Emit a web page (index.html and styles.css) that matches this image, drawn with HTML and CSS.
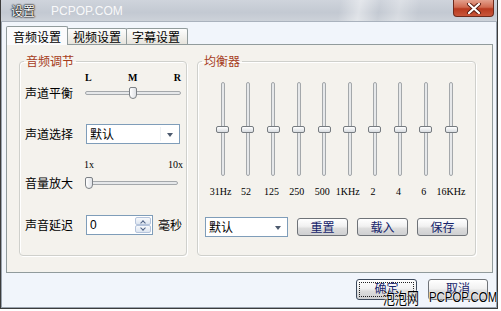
FILE: index.html
```html
<!DOCTYPE html>
<html lang="zh">
<head>
    <meta charset="UTF-8">
    <meta name="viewport" content="width=device-width, initial-scale=1.0">
    <title>设置</title>
    <link rel="stylesheet" href="styles.css">
</head>
<body>
    <div class="window">
        <div class="titlebar">
            <span class="title">设置</span>
            <span class="title-mark">PCPOP.COM</span>
            <div class="close-btn">
                <svg width="16" height="11" viewBox="0 0 16 11">
                    <path d="M3 1 L13 10 M13 1 L3 10" stroke="#5a1d12" stroke-width="4" stroke-linecap="round"/>
                    <path d="M3 1 L13 10 M13 1 L3 10" stroke="#fff" stroke-width="2.2" stroke-linecap="round"/>
                </svg>
            </div>
        </div>
        <div class="client">
            <div class="tabs">
                <div class="tab active">音频设置</div>
                <div class="tab">视频设置</div>
                <div class="tab">字幕设置</div>
            </div>
            <div class="panel">
                <fieldset class="group audio">
                    <legend>音频调节</legend>
                    <div class="scale lmr"><span>L</span><span>M</span><span>R</span></div>
                    <div class="field">
                        <span class="label">声道平衡</span>
                        <div class="hslider balance">
                            <div class="track"></div>
                            <div class="thumb" style="left: 44px"></div>
                        </div>
                    </div>
                    <div class="field combo-row">
                        <span class="label">声道选择</span>
                        <div class="combo wide">默认<span class="arrow"></span></div>
                    </div>
                    <div class="scale gain"><span>1x</span><span>10x</span></div>
                    <div class="field">
                        <span class="label">音量放大</span>
                        <div class="hslider volume">
                            <div class="track"></div>
                            <div class="thumb" style="left: 0px"></div>
                        </div>
                    </div>
                    <div class="field delay-row">
                        <span class="label">声音延迟</span>
                        <div class="spinner">
                            <span class="value">0</span>
                            <div class="spin-btns">
                                <div class="spin up"></div>
                                <div class="spin down"></div>
                            </div>
                        </div>
                        <span class="unit">毫秒</span>
                    </div>
                </fieldset>

                <fieldset class="group eq">
                    <legend>均衡器</legend>
                    <div class="eq-sliders">
                        <div class="vslider"><div class="track"></div><div class="thumb" style="top: 44px"></div></div>
                        <div class="vslider"><div class="track"></div><div class="thumb" style="top: 44px"></div></div>
                        <div class="vslider"><div class="track"></div><div class="thumb" style="top: 44px"></div></div>
                        <div class="vslider"><div class="track"></div><div class="thumb" style="top: 44px"></div></div>
                        <div class="vslider"><div class="track"></div><div class="thumb" style="top: 44px"></div></div>
                        <div class="vslider"><div class="track"></div><div class="thumb" style="top: 44px"></div></div>
                        <div class="vslider"><div class="track"></div><div class="thumb" style="top: 44px"></div></div>
                        <div class="vslider"><div class="track"></div><div class="thumb" style="top: 44px"></div></div>
                        <div class="vslider"><div class="track"></div><div class="thumb" style="top: 44px"></div></div>
                        <div class="vslider"><div class="track"></div><div class="thumb" style="top: 44px"></div></div>
                    </div>
                    <div class="eq-labels">
                        <span>31Hz</span><span>52</span><span>125</span><span>250</span><span>500</span>
                        <span>1KHz</span><span>2</span><span>4</span><span>6</span><span>16KHz</span>
                    </div>
                    <div class="eq-bottom">
                        <div class="combo preset">默认<span class="arrow"></span></div>
                        <button class="btn">重置</button>
                        <button class="btn">载入</button>
                        <button class="btn">保存</button>
                    </div>
                </fieldset>
            </div>
            <div class="footer">
                <button class="btn dlg default">确定</button>
                <button class="btn dlg">取消</button>
            </div>
        </div>
        <div class="watermark"><span class="wm-cn">泡泡网</span><span class="wm-en">PCPOP.COM</span></div>
    </div>
</body>
</html>
```

FILE: styles.css
```css
html, body {
    margin: 0;
    padding: 0;
}
body {
    background-color: #fff;
    font-family: "Noto Sans CJK SC", sans-serif;
    font-size: 12px;
    color: #000;
}
.window {
    position: relative;
    width: 496px;
    height: 308px;
    border: 1px solid #3c3c3c;
    border-top: none;
    background-color: #f1f5fb;
    display: flex;
    flex-direction: column;
    box-shadow: inset 1px 0 0 #9aa3ae, inset -1px 0 0 #9aa3ae, inset 0 -1px 0 #9aa3ae;
}
.titlebar {
    height: 22px;
    display: flex;
    align-items: flex-start;
    background: linear-gradient(100deg, rgba(255,255,255,0) 68%, rgba(255,255,255,0.45) 72%, rgba(255,255,255,0) 76%, rgba(255,255,255,0.3) 80%, rgba(255,255,255,0) 84%),
                linear-gradient(to bottom, #cfd4dc, #c3c9d2 60%, #cdd2d9);
    border-bottom: 1px solid #aab2bd;
    box-sizing: border-box;
}
.title {
    margin: 3px 0 0 10px;
    line-height: 16px;
    color: #fff;
    text-shadow: 0 0 2px #000, 0 0 2px #000, 0 0 1px #000;
}
.title-mark {
    margin: 4px 0 0 16px;
    line-height: 14px;
    font-family: "Liberation Sans", Arial, sans-serif;
    font-size: 12px;
    color: rgba(255, 255, 255, 0.9);
}
.close-btn {
    margin-left: auto;
    margin-right: 3px;
    width: 41px;
    height: 17px;
    box-sizing: border-box;
    border: 1px solid #6e2a1c;
    border-top: none;
    border-radius: 0 0 4px 4px;
    background: linear-gradient(to bottom, #e3a08d, #d06a50 45%, #b83a1f 55%, #c9563a);
    display: flex;
    align-items: center;
    justify-content: center;
}
.client {
    flex: 1;
    display: flex;
    flex-direction: column;
    padding: 4px 4px 0 5px;
}
.tabs {
    display: flex;
    align-items: flex-end;
    height: 18px;
    padding-left: 1px;
}
.tab {
    height: 15px;
    line-height: 15px;
    padding: 0 5px;
    border: 1px solid #919b9c;
    border-bottom: none;
    border-radius: 2px 2px 0 0;
    background: linear-gradient(to bottom, #fdfdfd, #e6e4dd);
    margin-left: -1px;
    box-sizing: content-box;
    white-space: nowrap;
}
.tab.active {
    position: relative;
    z-index: 1;
    height: 18px;
    line-height: 19px;
    margin-bottom: -1px;
    padding: 0 6px;
    background: #fbfbfc;
}
.tab + .tab {
    width: 48px;
}
.tab:last-child {
    width: 50px;
}
.panel {
    box-sizing: border-box;
    height: 229px;
    display: flex;
    gap: 10px;
    padding: 9px 16px 16px 12px;
    border: 1px solid #919b9c;
    background-color: #f4f2ed;
}
.group {
    margin: 0;
    border: 1px solid #cfd0cc;
    border-radius: 4px;
    box-shadow: inset 1px 1px 0 #fff, 1px 1px 0 #fff;
    min-width: 0;
    display: flex;
    flex-direction: column;
    box-sizing: border-box;
}
.group legend {
    padding: 0 2px;
    line-height: 14px;
    color: #a63c1c;
}
.audio {
    width: 168px;
    padding: 0 5px;
}
.audio legend {
    margin-left: -1px;
}
.eq {
    width: 279px;
    padding: 0 7px;
}
.eq legend {
    margin-left: -3px;
}
.scale {
    display: flex;
    justify-content: space-between;
    height: 12px;
    line-height: 12px;
    font-family: "Liberation Serif", serif;
    font-size: 10px;
}
.lmr {
    margin: 4px 0 0 60px;
    width: 96px;
    font-weight: bold;
}
.gain {
    margin: 15px 0 0 59px;
    width: 99px;
}
.field {
    display: flex;
    align-items: center;
    height: 16px;
    margin-top: 1px;
    white-space: nowrap;
}
.field .label {
    width: 61px;
    flex: none;
    line-height: 14px;
}
.combo-row {
    height: 20px;
    margin-top: 23px;
}
.gain + .field {
    margin-top: 4px;
}
.delay-row {
    height: 20px;
    margin-top: 24px;
}
.hslider {
    position: relative;
    height: 16px;
    margin-left: -1px;
}
.hslider.balance {
    width: 96px;
}
.hslider.volume {
    width: 93px;
}
.hslider .track {
    position: absolute;
    left: 0;
    right: 0;
    top: 6px;
    height: 4px;
    box-sizing: border-box;
    border: 1px solid #a4a8ab;
    border-radius: 2px;
    background-color: #e6e8ea;
}
.hslider .thumb {
    position: absolute;
    top: 2px;
    width: 8px;
    height: 12px;
    box-sizing: border-box;
    border: 1px solid #7c8186;
    border-radius: 2px 2px 4px 4px;
    background: linear-gradient(to right, #ffffff, #dfe2e6);
}
.combo {
    position: relative;
    box-sizing: border-box;
    height: 20px;
    line-height: 18px;
    padding-left: 3px;
    border: 1px solid #7f9db9;
    background-color: #fff;
}
.combo.wide {
    width: 94px;
}
.combo .arrow {
    position: absolute;
    right: 6px;
    top: 8px;
    width: 0;
    height: 0;
    border-left: 3.5px solid transparent;
    border-right: 3.5px solid transparent;
    border-top: 4px solid #4d5a6e;
}
.combo.wide::before {
    content: "";
    position: absolute;
    right: 18px;
    top: 2px;
    bottom: 2px;
    width: 1px;
    background-color: #eef1f4;
}
.spinner {
    display: flex;
    flex: none;
    box-sizing: border-box;
    width: 67px;
    height: 20px;
    border: 1px solid #7f9db9;
    background-color: #fff;
}
.spinner .value {
    flex: 1;
    padding-left: 3px;
    line-height: 18px;
    font-family: "Liberation Sans", Arial, sans-serif;
}
.spin-btns {
    display: flex;
    flex-direction: column;
    width: 16px;
    padding: 1px 1px 1px 0;
}
.spin {
    flex: 1;
    position: relative;
    border: 1px solid #b5c4dc;
    border-radius: 2px;
    background: linear-gradient(to bottom, #f7f9fc, #dde5f0);
}
.spin::after {
    content: "";
    position: absolute;
    left: 5px;
    width: 3px;
    height: 3px;
    border-left: 1px solid #4d6185;
    border-top: 1px solid #4d6185;
}
.spin.up::after {
    top: 3px;
    transform: rotate(45deg);
}
.spin.down::after {
    top: 0px;
    transform: rotate(225deg);
}
.unit {
    flex: none;
    margin-left: 5px;
    line-height: 14px;
}
.eq-sliders {
    display: grid;
    grid-template-columns: repeat(10, 25.4px);
    margin: 14px 0 0 5px;
    height: 94px;
}
.vslider {
    position: relative;
    height: 94px;
}
.vslider .track {
    width: 4px;
    height: 94px;
    margin: 0 auto;
    box-sizing: border-box;
    border: 1px solid #a4a8ab;
    border-radius: 2px;
    background-color: #e6e8ea;
}
.vslider .thumb {
    position: absolute;
    left: 6px;
    width: 13px;
    height: 7px;
    box-sizing: border-box;
    border: 1px solid #767b80;
    border-radius: 2px;
    background: linear-gradient(to bottom, #ffffff, #d8dce0);
}
.eq-labels {
    display: grid;
    grid-template-columns: repeat(10, 25.4px);
    margin: 10px 0 0 3px;
    height: 12px;
    line-height: 12px;
    text-align: center;
    font-family: "Liberation Serif", serif;
    font-size: 10px;
    white-space: nowrap;
}
.eq-bottom {
    display: flex;
    align-items: center;
    gap: 9px;
    height: 20px;
    margin-top: 19px;
}
.combo.preset {
    width: 83px;
}
.btn {
    box-sizing: border-box;
    width: 51px;
    height: 18px;
    padding: 0;
    border: 1px solid #6f7378;
    border-radius: 3px;
    background: linear-gradient(to bottom, #ffffff, #f1f1f1 45%, #dcdcdc 60%, #cfd0d2);
    font-family: "Noto Sans CJK SC", sans-serif;
    font-size: 12px;
    line-height: 14px;
    color: #16246b;
}
.footer {
    display: flex;
    justify-content: flex-end;
    gap: 11px;
    padding: 6px 5px 0 0;
}
.btn.dlg {
    width: 60px;
    height: 21px;
    line-height: 12px;
    padding-bottom: 4px;
}
.btn.default {
    width: 61px;
    border-color: #3d4a5c;
    outline: 1px dotted #222;
    outline-offset: -4px;
}
.watermark {
    position: absolute;
    left: 382px;
    top: 289px;
    display: flex;
    align-items: center;
    color: #000;
    text-shadow: 0 0 1px #fff, 0 0 1px #fff, 0 0 2px #fff;
    white-space: nowrap;
}
.wm-cn {
    font-size: 12px;
    transform: scale(1, 1.3);
    line-height: 16px;
}
.wm-en {
    font-family: "Liberation Sans", Arial, sans-serif;
    font-size: 15px;
    line-height: 16px;
    transform: scaleX(0.76);
    transform-origin: left center;
    margin-left: 10px;
}
```
